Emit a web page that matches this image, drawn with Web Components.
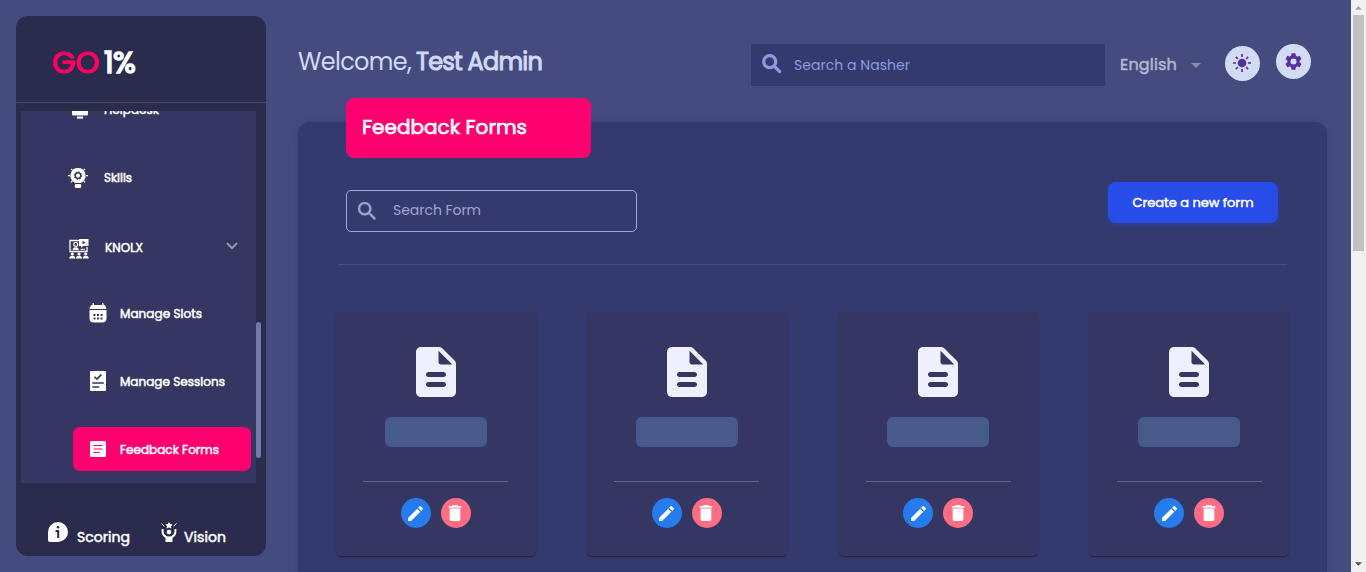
<!DOCTYPE html>
<html lang="en">
<head>
<meta charset="utf-8">
<title>Feedback Forms</title>
<style>
html,body{margin:0;height:100%;overflow:hidden}
body{font-family:Poppins,Inter,"Open Sans",sans-serif;background:#454a7f;color:#fff}
</style>
</head>
<body>
<go-app></go-app>
<script>
const define=(name,html,setup)=>customElements.define(name,class extends HTMLElement{
  connectedCallback(){
    if(this.shadowRoot)return;
    const t=document.createElement('template');
    t.innerHTML=typeof html==='function'?html(this):html;
    this.attachShadow({mode:'open'}).appendChild(t.content.cloneNode(true));
    if(setup)setup(this);
  }
});

// Text run spaced out to a given width; "bold" thickens the regular face
define('fit-text','<style>:host{display:inline-block;white-space:nowrap}:host([bold]){font-weight:400;-webkit-text-stroke:var(--stroke,.5px) currentColor}span{display:inline-block}</style><span><slot></slot></span>',el=>{
  const w=+el.getAttribute('w'),s=el.shadowRoot.querySelector('span'),n=el.textContent.length;
  s.style.letterSpacing=((w-s.getBoundingClientRect().width)/n)+'px';
});

const icons={
  desk:['0 0 20 20','<rect x="2" y="3" width="16" height="12.6" rx="1.5"/><rect x="7" y="16.6" width="6" height="2"/>'],
  bulb:['0 0 20 20','<path d="M10 0a7.6 7.6 0 0 1 4.2 13.9L13.2 15H6.8l-1-1.1A7.6 7.6 0 0 1 10 0z"/><g fill="none" stroke="#353662"><circle cx="10" cy="7.6" r="2.8" stroke-width="1.5"/><circle cx="10" cy="7.6" r="3.8" stroke-width="1" stroke-dasharray="1.4 1.58"/></g><rect x="6.8" y="16" width="6.4" height="4" rx="1.3"/><path d="M0 7.6h2M18 7.6h2M3 .8l1.4 1.4M17 .8l-1.4 1.4M3 14.4l1.4-1.4M17 14.4l-1.4-1.4" stroke="#fff" stroke-width="1.2"/>'],
  knolx:['0 0 20 20','<path d="M10 1.5H1v11h17V8" fill="none" stroke="#fff" stroke-width="1.3"/><path d="M10 0h9.5v7H14l-2 2V7h-2z"/><path d="M13.5 1.8l3 1.8-3 1.8z" fill="#353662"/><circle cx="6.7" cy="5.4" r="2" fill="none" stroke="#fff" stroke-width="1.2"/><path d="M3.7 11c0-2 1-2.700 3-2.700s3 .7 3 2.700z"/><path d="M11.5 10.300H16" stroke="#fff"/><circle cx="3.300" cy="15" r="1.600"/><circle cx="10" cy="15" r="1.600"/><circle cx="16.700" cy="15" r="1.600"/><path d="M.300 19.600c0-2 1-2.800 3-2.800s3 .8 3 2.800zM7 19.600c0-2 1-2.800 3-2.800s3 .8 3 2.800zM13.700 19.600c0-2 1-2.800 3-2.800s3 .8 3 2.800z"/>'],
  cal:['0 0 18 20','<path d="M3.500 0h1.500v2h8V0h1.500v2c1.800 0 2.700 1.500 2.900 4H.600C.800 3.500 1.700 2 3.500 2zM.500 7h17V15q0 4.500-4.500 4.500H5Q.500 19.500.500 15z"/><g fill="#353662"><path d="M4.500 11h2v2h-2zM8 11h2v2H8zM11.500 11h2v2h-2zM4.500 14.500h2v2h-2zM8 14.500h2v2H8zM11.500 14.500h2v2h-2z"/></g>'],
  check:['0 0 18 20','<rect x="1" width="16" height="20" rx=".8"/><path d="M5.500 5.800l2.500 2.300 4.300-4.500M3.300 12h11.500M3.300 16h7" fill="none" stroke="#353662" stroke-width="1.700"/>'],
  form:['0 0 16 16','<rect width="16" height="16" rx="1.500"/><path d="M3.500 4.500h9M3.500 8h9M3.500 11.500h6" stroke="#ff006e" stroke-width="1.200"/>'],
  info:['0 0 20 20','<path d="M10 0a10 10 0 1 1 0 20H2Q0 20 0 18v-8A10 10 0 0 1 10 0z"/><circle cx="10" cy="5.200" r="1.300" fill="#2a2b4d"/><path d="M7.500 9h2.700v7" fill="none" stroke="#2a2b4d" stroke-width="2"/>'],
  vision:['0 0 16 20','<path d="M8 0l1.200 2 2.500.400-1.700 1.800.400 2.400L8 5.600 5.600 6.600l.400-2.400-1.700-1.800L6.800 2z"/><circle cx="8" cy="10" r="2.300"/><path d="M1.600 7v3q0 3 3.600 5.200M14.400 7v3q0 3-3.600 5.200" fill="none" stroke="#fff" stroke-width="1.900"/><path d="M3.500 13.200q4.500 2.400 9 0l-1 2.500v4.200h-7v-4.200z"/><path d="M.500 1.500l2.800 2.800M15.500 1.500l-2.800 2.800" stroke="#fff"/>'],
  search:['3 3 17.500 17.500','<path d="M15.500 14h-.79l-.28-.27A6.471 6.471 0 0 0 16 9.500 6.500 6.500 0 1 0 9.500 16c1.610 0 3.090-.59 4.230-1.570l.27.28v.79l5 4.990L20.490 19l-4.990-5zm-6 0C7.010 14 5 11.990 5 9.500S7.010 5 9.500 5 14 7.010 14 9.500 11.990 14 9.500 14z" stroke="currentColor" stroke-width=".4"/>'],
  searchBold:['0 0 20 20','<circle cx="7.700" cy="7.700" r="6" fill="none" stroke="currentColor" stroke-width="3.200"/><path d="M12 12l5.700 5.700" stroke="currentColor" stroke-width="3.200" stroke-linecap="round"/>'],
  chev:['0 0 12 8','<path d="M1 1.200l5 5 5-5" fill="none" stroke="currentColor" stroke-width="1.900"/>'],
  caret:['0 0 10 5','<path d="M0 0h10L5 5z"/>'],
  sun:['0 0 20 20','<circle cx="10" cy="10" r="4.300"/><g stroke="currentColor" stroke-width="1.700"><path d="M10 1v3M10 16v3M1 10h3M16 10h3M3.900 3.900l1.900 1.900M14.200 14.200l1.900 1.900M16.100 3.900l-1.900 1.900M3.900 16.100l1.900-1.900"/></g>'],
  gear:['2 2 20 20','<path d="M19.140 12.940c.04-.3.06-.61.06-.94s-.02-.64-.07-.94l2.030-1.580a.49.49 0 0 0 .12-.61l-1.920-3.320a.49.49 0 0 0-.59-.22l-2.390.96a7 7 0 0 0-1.620-.94l-.36-2.540a.48.48 0 0 0-.48-.41h-3.840a.47.47 0 0 0-.47.41l-.36 2.540a7.300 7.300 0 0 0-1.620.94l-2.390-.96a.48.48 0 0 0-.59.22L2.740 8.870a.48.48 0 0 0 .12.610l2.030 1.580c-.05.3-.09.63-.09.940s.02.640.07.940l-2.030 1.580a.49.49 0 0 0-.12.610l1.920 3.320c.12.220.370.290.590.220l2.390-.96c.5.380 1.030.700 1.620.940l.360 2.540c.05.240.240.410.480.410h3.840c.240 0 .440-.170.470-.410l.360-2.540a7.300 7.300 0 0 0 1.620-.940l2.390.960c.220.080.470 0 .590-.220l1.920-3.320a.47.47 0 0 0-.12-.610zM12 15.600A3.600 3.600 0 1 1 12 8.400a3.600 3.600 0 0 1 0 7.200z"/>'],
  doc:['0 0 24 24','<path d="M14.590 2.590c-.38-.38-.89-.59-1.420-.59H6c-1.100 0-2 .9-2 2v16c0 1.100.890 2 1.990 2H18c1.100 0 2-.9 2-2V8.830c0-.53-.21-1.040-.59-1.410zM15 18H9c-.55 0-1-.45-1-1s.45-1 1-1h6c.550 0 1 .450 1 1s-.45 1-1 1zm0-4H9c-.55 0-1-.45-1-1s.450-1 1-1h6c.550 0 1 .450 1 1s-.45 1-1 1zm-2-6V3.500L18.500 9H14c-.55 0-1-.45-1-1z"/>'],
  pen:['3 3 18 18','<path d="M3 17.250V21h3.750L17.810 9.940l-3.750-3.750zM20.710 7.040a1 1 0 0 0 0-1.410l-2.340-2.340a1 1 0 0 0-1.410 0l-1.830 1.830 3.750 3.750z"/>'],
  bin:['3 3 18 18','<path d="M6 19c0 1.100.9 2 2 2h8c1.100 0 2-.9 2-2V7H6zM19 4h-3.500l-1-1h-5l-1 1H5v2h14z"/>']
};
define('go-icon',el=>{
  const [vb,body]=icons[el.getAttribute('name')];
  return `<style>:host{display:block;flex:none}svg{display:block}</style><svg width="${el.getAttribute('w')}" height="${el.getAttribute('h')}" viewBox="${vb}" fill="currentColor">${body}</svg>`;
});

// Sidebar row; label text is slotted in
define('nav-item',`<style>
:host{display:flex;align-items:center;flex:none;height:68px;padding-left:47px;font-size:12px;line-height:18px;box-sizing:border-box}
.i{width:36px;flex:none}:host([sub]){padding-left:68px}:host([sub]) .i{width:31px}
:host([active]){background:#ff006e;border-radius:7px;height:44px;width:178px;margin:9px 0 0 52px;padding-left:17px}
:host([active]) .i{width:30px}
.e{margin-left:auto;padding-right:18px;color:#9ea0ba}
</style><div class="i"><slot name="icon"></slot></div><slot></slot><div class="e"><slot name="end"></slot></div>`);

define('side-bar',`<style>
:host{display:flex;flex-direction:column;width:250px;height:540px;background:#2a2b4d;border-radius:12px;overflow:hidden;flex:none}
.logo{height:86px;border-bottom:1px solid #484966;display:flex;align-items:center;box-sizing:content-box;font-size:30px;line-height:44px;padding:0 0 0 36px;--stroke:1.2px}
.logo div{display:flex;gap:5px;margin-top:8px}.go{color:#ff0062}
.mid{height:372px;margin:8px 5px 0;display:flex;overflow:hidden}
.list{width:235px;background:#353662;display:flex;flex-direction:column;overflow:hidden}
.bar{width:5px;height:136px;margin-top:211px;background:#7379a8;border-radius:3px}
.foot{display:flex;flex:1;padding:0 0 0 32px;font-size:14px;line-height:20px}
.foot div{display:flex}.foot fit-text{margin-top:44px}
</style>
<div class="logo"><div><fit-text bold w="47" class="go">GO</fit-text><fit-text bold w="31" style="--stroke:1.6px">1%</fit-text></div></div>
<div class="mid"><div class="list">
<nav-item style="margin-top:-35px;height:67px"><go-icon slot="icon" name="desk" w="20" h="20" style="margin:1px 0 0 2px"></go-icon><fit-text bold w="55">Helpdesk</fit-text></nav-item>
<nav-item style="height:69px"><go-icon slot="icon" name="bulb" w="20" h="20"></go-icon><fit-text bold w="28">Skills</fit-text></nav-item>
<nav-item style="height:70px"><go-icon slot="icon" name="knolx" w="20" h="20" style="margin:3px 0 0 1px"></go-icon><fit-text bold w="38" style="margin:1px 0 0 1px">KNOLX</fit-text><go-icon slot="end" name="chev" w="12" h="8" style="margin-top:-3px"></go-icon></nav-item>
<nav-item sub style="height:63px"><go-icon slot="icon" name="cal" w="18" h="20" style="margin-top:-1px"></go-icon><fit-text bold w="82">Manage Slots</fit-text></nav-item>
<nav-item sub style="height:73px"><go-icon slot="icon" name="check" w="18" h="20" style="margin-top:-1px"></go-icon><fit-text bold w="105">Manage Sessions</fit-text></nav-item>
<nav-item active><go-icon slot="icon" name="form" w="16" h="16"></go-icon><fit-text bold w="99" style="margin-top:1px">Feedback Forms</fit-text></nav-item>
</div><div class="bar"></div></div>
<div class="foot"><div><go-icon name="info" w="20" h="20" style="margin-top:39px"></go-icon><fit-text bold w="53" style="margin-left:9px">Scoring</fit-text></div>
<div style="margin-left:31px"><go-icon name="vision" w="16" h="20" style="margin-top:39px"></go-icon><fit-text bold w="42" style="margin-left:7px">Vision</fit-text></div></div>`);

define('round-button','<style>:host{display:flex;align-items:center;justify-content:center;width:35px;height:35px;border-radius:50%;background:#d2dbf3;color:#57309f;flex:none}</style><slot></slot>');

define('top-bar',`<style>
:host{display:flex;align-items:flex-start;height:78px;color:#d0daf5}
.hi{width:453px;display:flex;gap:5px;font-size:24px;line-height:35px;--stroke:1px}
.q{width:354px;height:42px;box-sizing:border-box;background:#353a6e;color:#8c9ae0;display:flex;padding-left:11px;font-size:14px;line-height:42px}
.q go-icon{margin:10px 12px 0 0}
.lang{color:#b5b6cc;font-size:16px;line-height:41px;margin-left:15px;display:flex;width:105px}
.lang go-icon{color:#8c8ca6;margin:19px 0 0 14px}
</style>
<div class="hi"><fit-text w="113">Welcome,</fit-text><fit-text bold w="126">Test Admin</fit-text></div>
<div class="q"><go-icon name="searchBold" w="20" h="20"></go-icon><fit-text w="116">Search a Nasher</fit-text></div>
<div class="lang"><fit-text bold w="57">English</fit-text><go-icon name="caret" w="10" h="5"></go-icon></div>
<round-button style="margin-top:2px"><go-icon name="sun" w="20" h="20" style="margin:-1px 0 0 -1px"></go-icon></round-button>
<round-button style="margin-left:16px"><go-icon name="gear" w="17" h="17" style="margin-left:-1px"></go-icon></round-button>`);

define('form-card',`<style>
:host{display:flex;flex-direction:column;align-items:center;height:244px;background:#353662;border-radius:5px;box-shadow:0 2px 1px -1px #0003,0 1px 1px #00000024,0 1px 3px #0000001f;color:#eeefff}
.n{width:102px;height:30px;border-radius:6px;background:#465a8c;margin-top:15px}
hr{width:145px;height:1px;border:0;background:#62648a;margin:34px 0 16px}
.a{display:flex;gap:10px}
round-button{width:30px;height:30px;color:#fff}
</style><go-icon name="doc" w="60" h="60" style="margin-top:30px"></go-icon><div class="n"></div><hr>
<div class="a"><round-button style="background:#267bed"><go-icon name="pen" w="15" h="15"></go-icon></round-button><round-button style="background:#ff6d84"><go-icon name="bin" w="16" h="16" style="margin-left:-1px"></go-icon></round-button></div>`);

define('forms-panel',`<style>
:host{display:block;width:1029px;height:500px;background:#353a6e;border-radius:12px;box-shadow:0 0 6px #2a2b4d33;box-sizing:border-box}
.title{position:relative;top:-24px;margin-left:48px;width:245px;height:60px;box-sizing:border-box;padding-left:16px;background:#ff006e;border-radius:8px;font-size:20px;line-height:58px;--stroke:.7px}
.tools{display:flex;justify-content:space-between;margin:0 49px 0 48px;height:82px}
.f{margin-top:8px;width:291px;height:42px;box-sizing:border-box;border:1px solid #a3a9d6;border-radius:5px;display:flex;color:#a0a5ce;font-size:14px;line-height:38px;padding-left:11px}
.f go-icon{margin:11px 17px 0 0}
.b{width:170px;height:41px;border-radius:8px;background:#284ce8;box-shadow:0 2px 5px #284ce866;text-align:center;font-size:13px;line-height:41px}
.line{height:1px;background:#484c7a;margin:0 40px}
.cards{display:grid;grid-template-columns:repeat(4,200px);justify-content:space-between;margin:47px 37.750px 0 37.500px}
</style>
<div class="title"><fit-text bold w="165">Feedback Forms</fit-text></div>
<div class="tools"><div class="f"><go-icon name="search" w="18" h="18"></go-icon><fit-text w="88">Search Form</fit-text></div><div class="b"><fit-text bold w="121">Create a new form</fit-text></div></div>
<div class="line"></div>
<div class="cards"><form-card></form-card><form-card></form-card><form-card></form-card><form-card></form-card></div>`);

define('page-scrollbar',`<style>:host{display:flex;flex-direction:column;align-items:center;width:15px;height:572px;background:#f1f1f1;flex:none}
.t{width:11px;height:236px;background:#c1c1c1;margin-top:5px}</style>
<go-icon name="caret" w="7" h="4" style="margin-top:6px;color:#a3a3a3;transform:rotate(180deg)"></go-icon><div class="t"></div><go-icon name="caret" w="7" h="4" style="margin:auto 0 6px;color:#505050"></go-icon>`);

define('go-app',`<style>
:host{display:flex;height:572px;overflow:hidden}
side-bar{margin:16px 32px 0 16px}
main{flex:1;padding-top:44px;min-width:0}
</style><side-bar></side-bar><main><top-bar></top-bar><forms-panel></forms-panel></main><page-scrollbar></page-scrollbar>`);
</script>
</body>
</html>
